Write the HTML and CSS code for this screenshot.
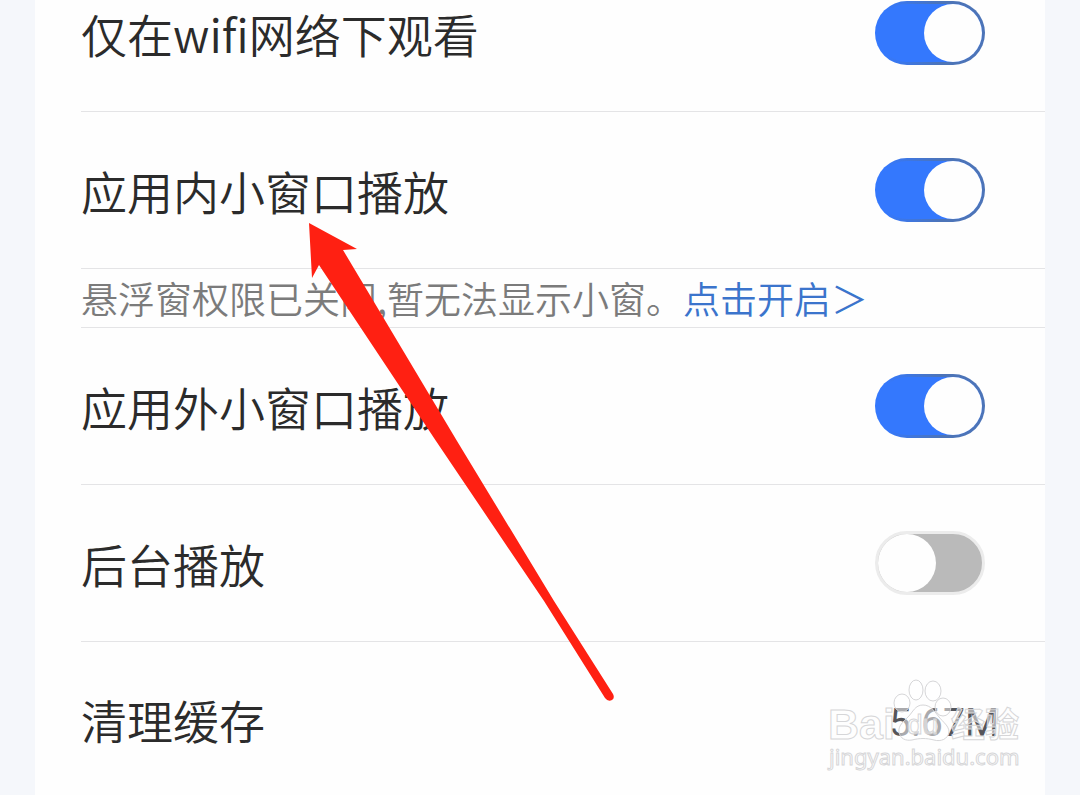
FILE: index.html
```html
<!DOCTYPE html>
<html lang="zh-CN">
<head>
    <meta charset="UTF-8">
    <meta name="viewport" content="width=device-width, initial-scale=1.0">
    <title>播放设置</title>
    <link rel="stylesheet" href="styles.css">
</head>
<body>
    <main class="settings">
        <div class="row first">
            <label for="wifi-only">仅在wifi网络下观看</label>
            <input type="checkbox" class="switch" id="wifi-only" checked>
        </div>
        <div class="row">
            <label for="inner-window">应用内小窗口播放</label>
            <input type="checkbox" class="switch" id="inner-window" checked>
        </div>
        <p class="notice">悬浮窗权限已关闭,暂无法显示小窗。<a href="#permission">点击开启＞</a></p>
        <div class="row">
            <label for="outer-window">应用外小窗口播放</label>
            <input type="checkbox" class="switch" id="outer-window" checked>
        </div>
        <div class="row">
            <label for="background-play">后台播放</label>
            <input type="checkbox" class="switch" id="background-play">
        </div>
        <div class="row last">
            <span>清理缓存</span>
            <span class="size">5.67M</span>
            <svg class="watermark" width="200" height="100" viewBox="0 0 200 100">
                <g class="mark">
                    <ellipse cx="77" cy="28" rx="8" ry="9"/>
                    <ellipse cx="91" cy="15" rx="7" ry="10"/>
                    <ellipse cx="108" cy="16" rx="8" ry="10"/>
                    <ellipse cx="118" cy="32" rx="8" ry="9"/>
                    <text class="brand" x="3" y="64">Bai</text>
                    <path d="M98 30c-8 0-10 7-15 12s-10 9-9 15c1 7 7 9 13 8 8-2 14-2 22 0 7 2 14-1 15-8 0-6-6-10-10-15s-8-12-16-12z"/>
                    <text class="du" x="82" y="59">du</text>
                    <text class="cn" x="126" y="62">经验</text>
                    <text class="site" x="4" y="90">jingyan.baidu.com</text>
                </g>
            </svg>
        </div>
    </main>

    <!-- pointer to the in-app window option -->
    <svg class="arrow" width="310" height="482" viewBox="0 0 310 482">
        <path d="M1 1L49 27L35 28L149 219L246 379L305 472Q307 476 304 478Q300 480 297 476L236 379L128 219L11 43L4 56Z"/>
    </svg>
</body>
</html>
```

FILE: styles.css
```css
* {
    box-sizing: border-box;
}
body {
    margin: 0;
    position: relative;
    background: #f5f7fb;
    color: #2b2b2b;
    font-family: "Noto Sans CJK SC", sans-serif;
    font-weight: 350;
}
.settings {
    margin: 0 35px;
    padding-left: 46px;
    min-height: 100vh;
    background: #fefefe;
}
.row {
    position: relative;
    display: flex;
    align-items: center;
    justify-content: space-between;
    padding: 46px 60px 46px 0;
    border-bottom: 1px solid #e4e4e6;
    font-size: 46px;
    line-height: 62px;
}
.first {
    padding-top: 1px;
}
.last {
    padding-right: 46px;
    padding-bottom: 32px;
    border-bottom: none;
}
.size {
    padding-top: 8px;
    color: #55555a;
    font-family: Roboto, sans-serif;
    font-size: 39px;
    font-weight: 400;
    line-height: 54px;
}
.notice {
    margin: 0;
    border-bottom: 1px solid #e4e4e6;
    color: #7b7b7b;
    font-size: 37px;
    line-height: 58px;
}
.notice a {
    color: #3b74cc;
    text-decoration: none;
}

/* switches */
.switch {
    appearance: none;
    position: relative;
    width: 110px;
    height: 64px;
    margin: 0;
    border: 3px solid #ececec;
    border-radius: 32px;
    background: #bababa;
    cursor: pointer;
}
.switch::before {
    content: "";
    position: absolute;
    top: 0;
    left: 0;
    width: 58px;
    height: 58px;
    border-radius: 50%;
    background: #fefefe;
}
.switch:checked {
    border-color: transparent;
    background: linear-gradient(#3478fd, #3478fd) padding-box,
                linear-gradient(to right, #3478fd 10%, #4c74b8 60%) border-box;
}
.switch:checked::before {
    left: 46px;
}

.watermark {
    position: absolute;
    top: 33px;
    right: 20px;
}
.mark {
    fill: rgba(255, 255, 255, 0.5);
    stroke: #d6d6d8;
    stroke-width: 1px;
    font-family: "Liberation Sans", sans-serif;
}
.brand {
    font-size: 43px;
    font-weight: bold;
}
.du {
    font-size: 28px;
}
.cn {
    font-family: "Noto Sans CJK SC", sans-serif;
    font-size: 34px;
    font-weight: bold;
}
.site {
    font-family: "Noto Sans", sans-serif;
    font-size: 22px;
    font-weight: 400;
}
.arrow {
    position: absolute;
    top: 222px;
    left: 308px;
    fill: #ff2012;
    pointer-events: none;
}
```
